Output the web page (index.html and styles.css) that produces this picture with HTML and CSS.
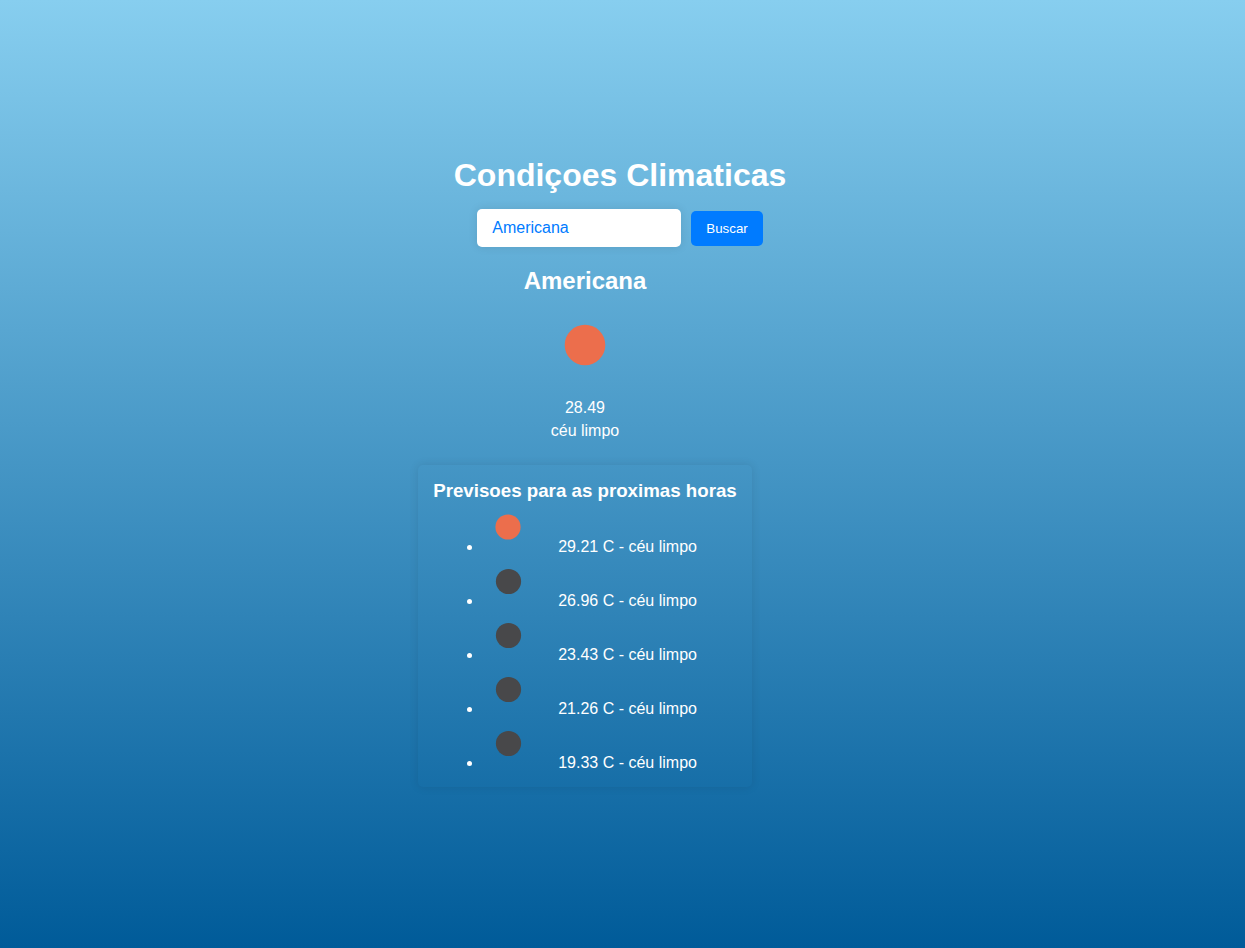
FILE: index.html
```html
<!DOCTYPE html>
<html lang="pt-BR">
<head>
<meta charset="UTF-8">
<meta name="viewport" content="width=device-width, initial-scale=1">
<title>Condiçoes Climaticas</title>
<link rel="stylesheet" href="styles.css">
</head>
<body>
<main class="app">
  <header class="header">
    <h1 class="title">Condiçoes Climaticas</h1>
    <form class="search">
      <input class="search-input" type="text" value="Americana" aria-label="Cidade">
      <button class="search-button" type="button">Buscar</button>
    </form>
  </header>
  <section class="weather">
    <h2 class="city">Americana</h2>
    <svg class="icon-now" viewBox="0 0 100 100" aria-hidden="true"><circle class="sun" cx="50" cy="50" r="20.3"/></svg>
    <p class="reading">28.49</p>
    <p class="reading">céu limpo</p>
    <div class="forecast">
      <h3 class="forecast-title">Previsoes para as proximas horas</h3>
      <ul class="hours">
        <li><svg class="icon-hour" viewBox="0 0 50 50" aria-hidden="true"><circle class="sun" cx="25" cy="25" r="12.6"/></svg>29.21 C - céu limpo</li>
        <li><svg class="icon-hour" viewBox="0 0 50 50" aria-hidden="true"><circle class="moon" cx="25.5" cy="25.5" r="12.6"/></svg>26.96 C - céu limpo</li>
        <li><svg class="icon-hour" viewBox="0 0 50 50" aria-hidden="true"><circle class="moon" cx="25.5" cy="25.5" r="12.6"/></svg>23.43 C - céu limpo</li>
        <li><svg class="icon-hour" viewBox="0 0 50 50" aria-hidden="true"><circle class="moon" cx="25.5" cy="25.5" r="12.6"/></svg>21.26 C - céu limpo</li>
        <li><svg class="icon-hour" viewBox="0 0 50 50" aria-hidden="true"><circle class="moon" cx="25.5" cy="25.5" r="12.6"/></svg>19.33 C - céu limpo</li>
      </ul>
    </div>
  </section>
</main>
</body>
</html>
```
FILE: styles.css
```css
* {
  box-sizing: border-box;
  margin: 0;
  padding: 0;
}

body {
  min-height: 100vh;
  display: flex;
  align-items: center;
  justify-content: center;
  padding-bottom: 4px;
  background: linear-gradient(to bottom, #87ceef, #005b99);
  color: #fff;
  font-family: "Liberation Sans", Arial, sans-serif;
  font-size: 16px;
}

.app {
  display: flex;
  flex-direction: column;
  align-items: center;
  gap: 20px;
}

.header {
  display: flex;
  flex-direction: column;
  align-items: center;
  gap: 16px;
  padding-right: 5px;
}

.title {
  font-size: 32px;
  line-height: 36px;
}

.search {
  display: flex;
  align-items: center;
  gap: 10px;
}

.search-input {
  width: 204px;
  height: 38px;
  padding: 10px 15px;
  border: 0;
  border-radius: 5px;
  background: #fff;
  box-shadow: 0 0 10px rgba(0, 0, 0, 0.1);
  color: #007bff;
  font: inherit;
}

.search-button {
  padding: 10px 15px;
  border: 0;
  border-radius: 5px;
  background: #007bff;
  color: #fff;
  font-family: inherit;
  line-height: 15px;
  cursor: pointer;
}

.weather {
  display: flex;
  flex-direction: column;
  align-items: center;
  margin-right: 75px;
}

.city {
  font-size: 24px;
  line-height: 28px;
}

.icon-now {
  width: 100px;
  height: 100px;
}

.reading {
  margin-top: 3px;
  line-height: 20px;
}

.forecast {
  margin-top: 24px;
  padding: 15px;
  border-radius: 5px;
  box-shadow: 0 0 10px rgba(0, 0, 0, 0.1);
}

.forecast-title {
  line-height: 22px;
}

.hours {
  padding-left: 50px;
}

.icon-hour {
  width: 50px;
  height: 50px;
  margin-right: 25px;
}

.sun {
  fill: #ec6e4c;
}

.moon {
  fill: #48484a;
}
```
